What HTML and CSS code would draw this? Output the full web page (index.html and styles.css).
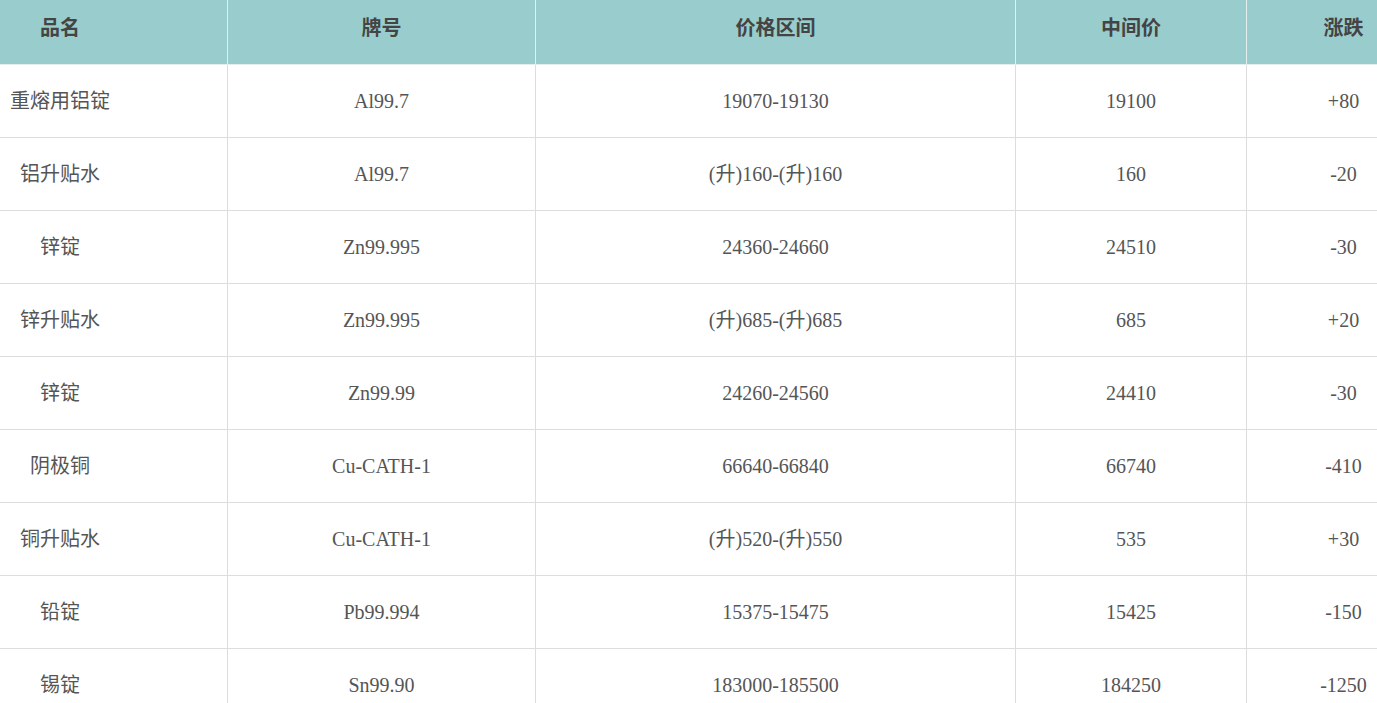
FILE: index.html
```html
<!DOCTYPE html>
<html lang="zh-CN">
<head>
<meta charset="utf-8">
<title>价格</title>
<link rel="stylesheet" href="styles.css">
</head>
<body>
<div class="price-table">
  <div class="cell head first"><span class="name">品名</span></div>
  <div class="cell head">牌号</div>
  <div class="cell head">价格区间</div>
  <div class="cell head">中间价</div>
  <div class="cell head">涨跌</div>

  <div class="cell first"><span class="name">重熔用铝锭</span></div>
  <div class="cell">Al99.7</div>
  <div class="cell">19070-19130</div>
  <div class="cell">19100</div>
  <div class="cell">+80</div>

  <div class="cell first"><span class="name">铝升贴水</span></div>
  <div class="cell">Al99.7</div>
  <div class="cell">(升)160-(升)160</div>
  <div class="cell">160</div>
  <div class="cell">-20</div>

  <div class="cell first"><span class="name">锌锭</span></div>
  <div class="cell">Zn99.995</div>
  <div class="cell">24360-24660</div>
  <div class="cell">24510</div>
  <div class="cell">-30</div>

  <div class="cell first"><span class="name">锌升贴水</span></div>
  <div class="cell">Zn99.995</div>
  <div class="cell">(升)685-(升)685</div>
  <div class="cell">685</div>
  <div class="cell">+20</div>

  <div class="cell first"><span class="name">锌锭</span></div>
  <div class="cell">Zn99.99</div>
  <div class="cell">24260-24560</div>
  <div class="cell">24410</div>
  <div class="cell">-30</div>

  <div class="cell first"><span class="name">阴极铜</span></div>
  <div class="cell">Cu-CATH-1</div>
  <div class="cell">66640-66840</div>
  <div class="cell">66740</div>
  <div class="cell">-410</div>

  <div class="cell first"><span class="name">铜升贴水</span></div>
  <div class="cell">Cu-CATH-1</div>
  <div class="cell">(升)520-(升)550</div>
  <div class="cell">535</div>
  <div class="cell">+30</div>

  <div class="cell first"><span class="name">铅锭</span></div>
  <div class="cell">Pb99.994</div>
  <div class="cell">15375-15475</div>
  <div class="cell">15425</div>
  <div class="cell">-150</div>

  <div class="cell first"><span class="name">锡锭</span></div>
  <div class="cell">Sn99.90</div>
  <div class="cell">183000-185500</div>
  <div class="cell">184250</div>
  <div class="cell">-1250</div>
</div>
</body>
</html>
```

FILE: styles.css
```css
html, body {
  margin: 0;
  padding: 0;
  background: #ffffff;
  overflow: hidden;
}

body {
  font-family: "Liberation Serif", "Noto Sans CJK SC", serif;
  font-size: 20px;
  color: #555555;
}

.price-table {
  display: grid;
  grid-template-columns: 228px 308px 480px 231px 194px;
  grid-template-rows: 65px;
  grid-auto-rows: 73px;
  width: 1441px;
}

.cell {
  box-sizing: border-box;
  border-right: 1px solid #dddddd;
  border-bottom: 1px solid #dddddd;
  display: flex;
  align-items: center;
  justify-content: center;
  line-height: 20px;
  white-space: nowrap;
}

.cell.head {
  align-items: flex-start;
  padding-top: 18px;
  background: #99cccc;
  border-right-color: #e4eeee;
  border-bottom-color: #e4eeee;
  color: #444444;
  font-weight: bold;
}

.cell.first {
  justify-content: flex-start;
  padding-left: 10px;
}

.name {
  display: inline-block;
  width: 100px;
  text-align: center;
}
```
